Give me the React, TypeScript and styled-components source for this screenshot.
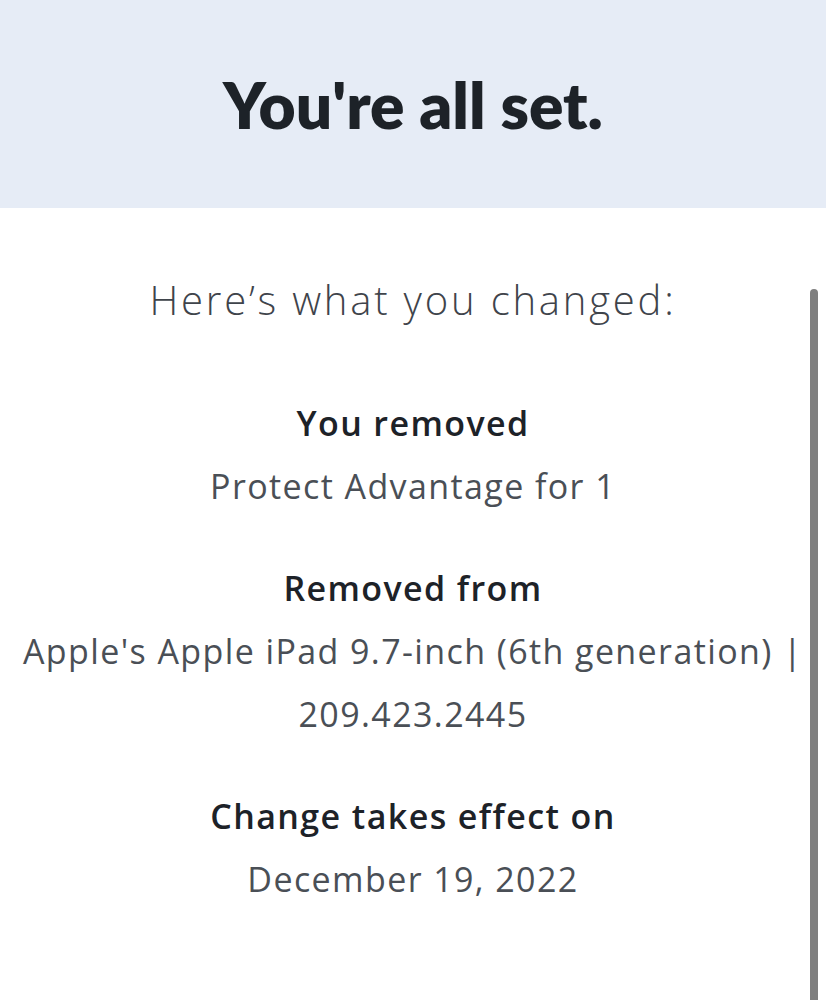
import React from "react";
import styled, { createGlobalStyle } from "styled-components";

const Global = createGlobalStyle`
  html, body { margin: 0; padding: 0; background: #ffffff; }
  body { font-family: "Open Sans", Lato, sans-serif; overflow: hidden; }
`;

const Page = styled.div`
  position: relative;
  width: 826px;
  height: 1000px;
  overflow: hidden;
  background: #ffffff;
`;

const Banner = styled.header`
  height: 208px;
  background: #e6ecf6;
  display: flex;
  align-items: center;
  justify-content: center;
`;

const Title = styled.h1`
  margin: 0;
  font-family: Lato, "Open Sans", sans-serif;
  font-size: 64px;
  font-weight: 800;
  color: #1d2228;
`;

const Body = styled.main`
  display: flex;
  flex-direction: column;
  align-items: center;
  padding-top: 68px;
`;

const Subtitle = styled.h2`
  margin: 0 0 68px;
  font-size: 40px;
  font-weight: 300;
  letter-spacing: 2.8px;
  color: #3f444b;
  line-height: 48px;
`;

const Group = styled.section`
  display: flex;
  flex-direction: column;
  align-items: center;
  margin-bottom: 39px;
`;

const Label = styled.div`
  font-size: 34px;
  font-weight: 600;
  letter-spacing: 1.4px;
  color: #1d2228;
  line-height: 63px;
  white-space: nowrap;
`;

const Value = styled.div`
  font-size: 34px;
  font-weight: 400;
  letter-spacing: 1.4px;
  color: #4a4f56;
  line-height: 63px;
  white-space: nowrap;
`;

const Scrollbar = styled.div`
  position: absolute;
  right: 8px;
  top: 289px;
  bottom: 0;
  width: 8px;
  border-radius: 4px 4px 0 0;
  background: #7f7f7f;
`;

const items = [
  { label: "You removed", values: ["Protect Advantage for 1"] },
  {
    label: "Removed from",
    values: ["Apple's Apple iPad 9.7-inch (6th generation) |", "209.423.2445"],
  },
  { label: "Change takes effect on", values: ["December 19, 2022"] },
];

export default function App() {
  return (
    <Page>
      <Global />
      <Banner>
        <Title>You're all set.</Title>
      </Banner>
      <Body>
        <Subtitle>Here’s what you changed:</Subtitle>
        {items.map((it) => (
          <Group key={it.label}>
            <Label>{it.label}</Label>
            {it.values.map((v) => (
              <Value key={v}>{v}</Value>
            ))}
          </Group>
        ))}
      </Body>
      <Scrollbar />
    </Page>
  );
}
